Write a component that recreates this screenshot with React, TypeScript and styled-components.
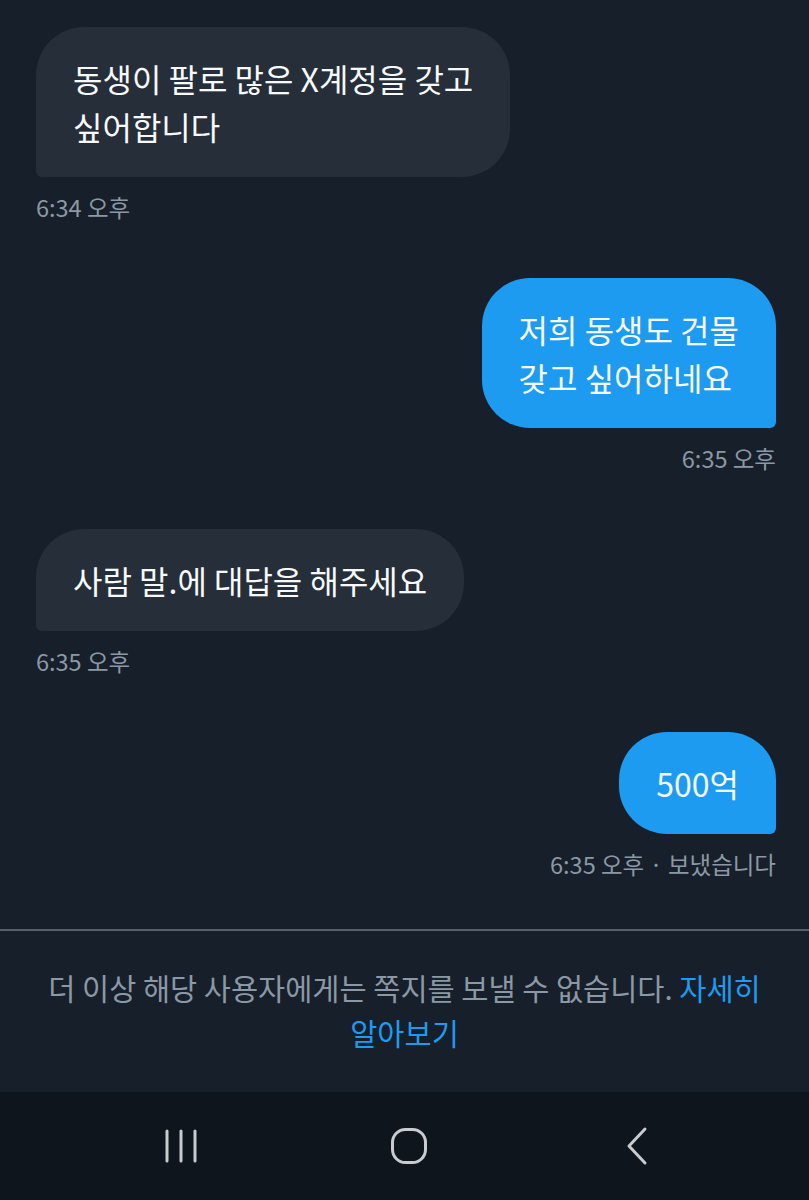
import React from "react";
import styled, { createGlobalStyle } from "styled-components";

const GlobalStyle = createGlobalStyle`
  html, body {
    margin: 0;
    padding: 0;
    background: #171f2a;
  }
  body {
    font-family: "Noto Sans CJK KR", "Noto Sans", sans-serif;
    -webkit-font-smoothing: antialiased;
  }
`;

const Screen = styled.div`
  width: 809px;
  min-height: 1200px;
  display: flex;
  flex-direction: column;
  background: #171f2a;
`;

const Thread = styled.div`
  display: flex;
  flex-direction: column;
  gap: 57px;
  padding: 27px 33px 0 36px;
`;

const Group = styled.div<{ $mine?: boolean }>`
  display: flex;
  flex-direction: column;
  align-items: ${props => (props.$mine ? "flex-end" : "flex-start")};
`;

const Bubble = styled.div<{ $mine?: boolean }>`
  width: fit-content;
  padding: 27px 37px 27px 37px;
  font-size: 32px;
  line-height: 48px;
  color: #f7f9f9;
  white-space: pre-line;
  background: ${props => (props.$mine ? "#1d9bf0" : "#252e39")};
  border-radius: ${props => (props.$mine ? "48px 48px 6px 48px" : "48px 48px 48px 6px")};
`;

const Stamp = styled.div`
  margin-top: 16px;
  font-size: 23.5px;
  line-height: 28px;
  color: #8b98a5;
`;

const Divider = styled.div`
  margin-top: 51px;
  height: 2px;
  background: #56606a;
`;

const Notice = styled.p`
  margin: 0;
  padding: 34px 44px 35px;
  text-align: center;
  font-size: 29.5px;
  line-height: 45px;
  color: #8b98a5;
`;

const Link = styled.a`
  color: #1d9bf0;
  text-decoration: none;
`;

const NavBar = styled.div`
  margin-top: auto;
  height: 108px;
  display: flex;
  justify-content: center;
  align-items: center;
  padding-left: 8px;
  background: #0f151d;
`;

const NavCell = styled.div`
  width: 228px;
  display: flex;
  justify-content: center;
  align-items: center;
`;

const icon = { fill: "none", stroke: "#c8ccd0", strokeWidth: 3, strokeLinecap: "round" as const };

const messages = [
  { mine: false, text: "동생이 팔로 많은 X계정을 갖고\n싶어합니다", time: "6:34 오후" },
  { mine: true, text: "저희 동생도 건물\n갖고 싶어하네요", time: "6:35 오후" },
  { mine: false, text: "사람 말.에 대답을 해주세요", time: "6:35 오후" },
  { mine: true, text: "500억", time: "6:35 오후 · 보냈습니다" },
];

export default function App() {
  return (
    <Screen>
      <GlobalStyle />
      <Thread>
        {messages.map((m, i) => (
          <Group key={i} $mine={m.mine}>
            <Bubble $mine={m.mine}>{m.text}</Bubble>
            <Stamp>{m.time}</Stamp>
          </Group>
        ))}
      </Thread>
      <Divider />
      <Notice>
        더 이상 해당 사용자에게는 쪽지를 보낼 수 없습니다. <Link href="#">자세히 알아보기</Link>
      </Notice>
      <NavBar>
        <NavCell>
          <svg width="34" height="36" viewBox="0 0 34 36">
            <line x1="3" y1="3" x2="3" y2="33" {...icon} />
            <line x1="17" y1="3" x2="17" y2="33" {...icon} />
            <line x1="31" y1="3" x2="31" y2="33" {...icon} />
          </svg>
        </NavCell>
        <NavCell>
          <svg width="38" height="38" viewBox="0 0 38 38">
            <rect x="2.5" y="2.5" width="33" height="33" rx="13" {...icon} />
          </svg>
        </NavCell>
        <NavCell>
          <svg width="24" height="40" viewBox="0 0 24 40">
            <polyline points="20,3 4,20 20,37" {...icon} strokeLinejoin="round" />
          </svg>
        </NavCell>
      </NavBar>
    </Screen>
  );
}
